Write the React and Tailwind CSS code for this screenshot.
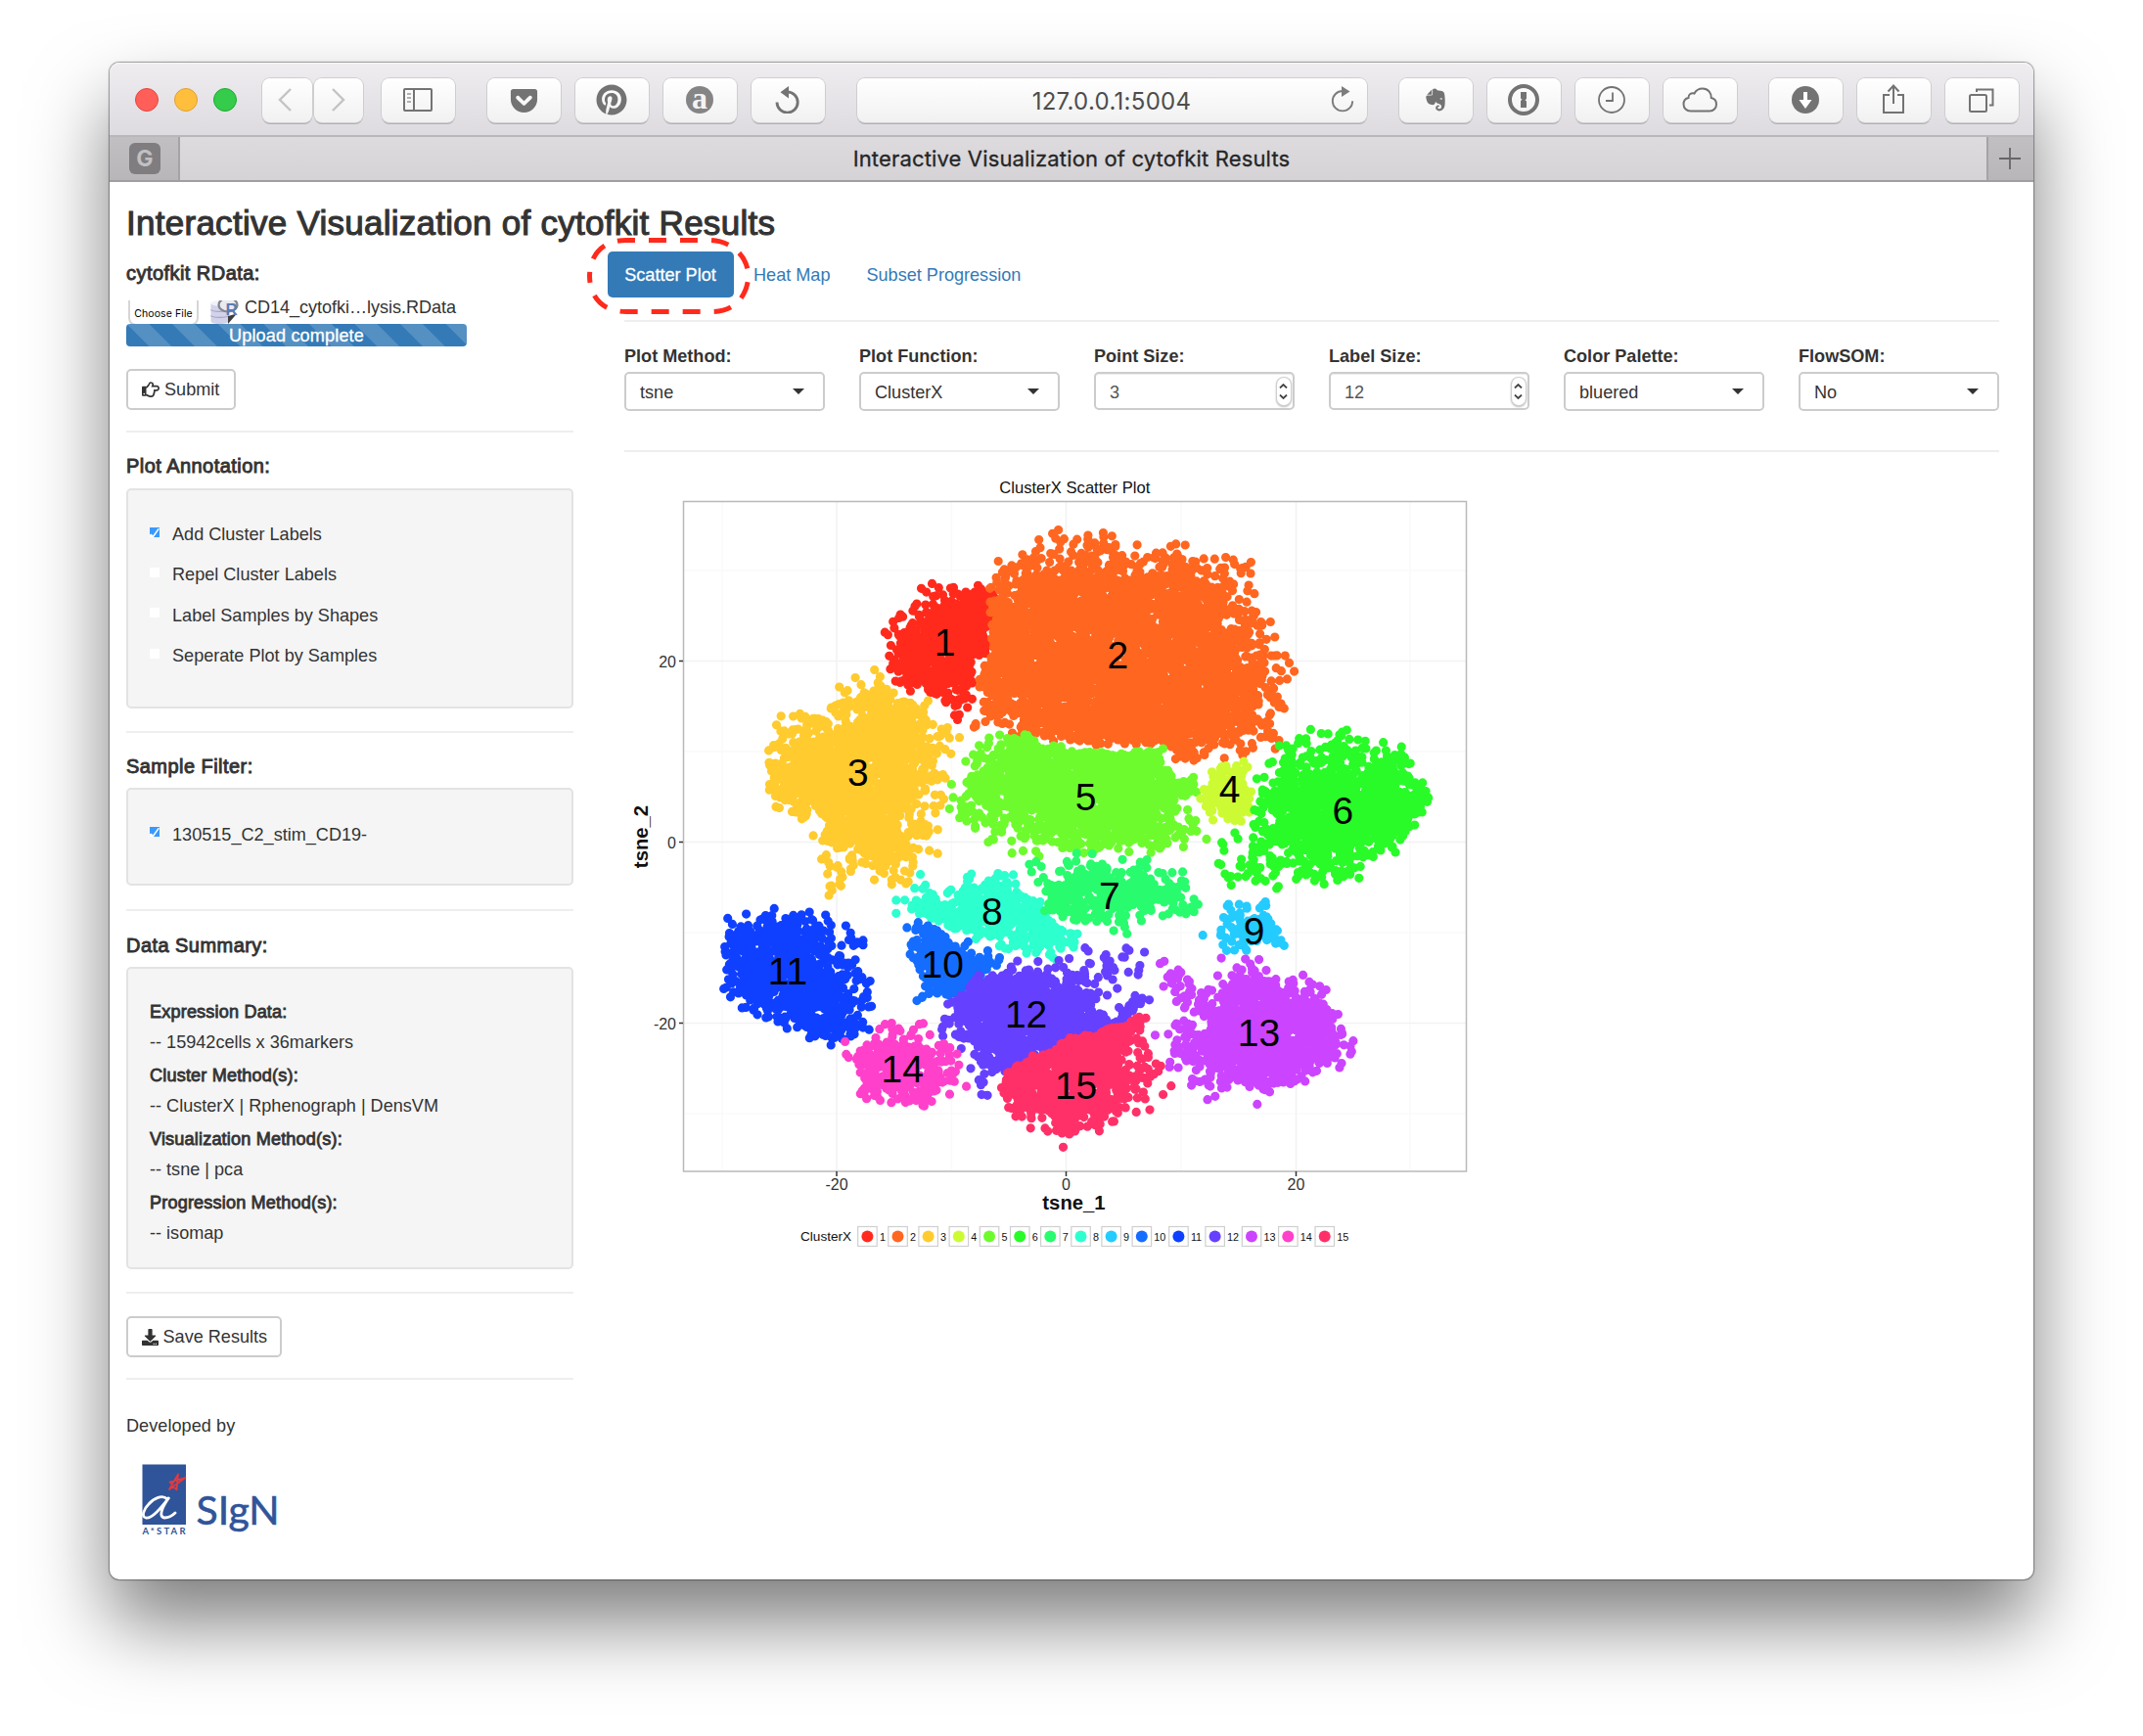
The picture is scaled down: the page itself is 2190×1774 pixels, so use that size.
import React from "react";
import { FaGetPocket, FaPinterest, FaEvernote, FaRegHandPointRight, FaDownload } from "react-icons/fa";

const ARIAL = "font-['Liberation_Sans',Arial,sans-serif]";
const BTN =
  "flex h-[45px] shrink-0 items-center justify-center rounded-[8px] bg-linear-to-b from-white to-[#f1f1f1] text-[#737373] shadow-[0_0_0_1px_#cfcdd0,0_2px_0_0_#b3b1b4]";

function ToolButton({ className = "w-[75px]", children }) {
  return <div className={`${BTN} ${className}`}>{children}</div>;
}

function Toolbar() {
  return (
    <div className="flex h-[74px] items-start rounded-t-[10px] bg-linear-to-b from-[#efedf0] to-[#dddbdf] pt-[15.5px] pl-[26px] shadow-[inset_0_1px_0_#f8f8f8]">
      <div className="flex h-[45px] items-center gap-4">
        <div className="size-6 rounded-full border border-[#e2463f] bg-[#ff5f58]" />
        <div className="size-6 rounded-full border border-[#e0a032] bg-[#ffbf3c]" />
        <div className="size-6 rounded-full border border-[#1dab32] bg-[#35cb4b]" />
      </div>
      <ToolButton className="ml-[26px] w-[51px] pr-[5px]">
        <svg width="14" height="24" viewBox="0 0 14 24" fill="none" stroke="#c3c3c3" strokeWidth="2.4"><path d="M13 1 2 12l11 11" /></svg>
      </ToolButton>
      <ToolButton className="ml-[1.5px] w-[50px]">
        <svg width="14" height="24" viewBox="0 0 14 24" fill="none" stroke="#c3c3c3" strokeWidth="2.4"><path d="m1 1 11 11L1 23" /></svg>
      </ToolButton>
      <ToolButton className="ml-[19px] w-[75px]">
        <svg width="30" height="24" viewBox="0 0 30 24" fill="none" stroke="#737373" strokeWidth="2">
          <rect x="1" y="1" width="28" height="22" rx="1" />
          <path d="M11 1v22" />
          <path d="M4 6h4M4 10h4M4 14h4" stroke="#999" strokeWidth="1.6" />
        </svg>
      </ToolButton>
      <div className="ml-[33px] flex gap-[15px]">
        <ToolButton><FaGetPocket size={31} /></ToolButton>
        <ToolButton><FaPinterest size={32} /></ToolButton>
        <ToolButton>
          <div className="flex size-[28px] items-center justify-center rounded-full bg-[#858585] pb-[4px] font-['Liberation_Serif',serif] text-[32px] leading-none font-bold text-[#f4f4f4]">a</div>
        </ToolButton>
        <ToolButton>
          <svg width="26" height="28" viewBox="0 0 26 28" fill="none" stroke="#737373" strokeWidth="2.8">
            <path d="M2 16.5a10.6 10.6 0 1 0 10.6-10.6" />
            <path d="M14 0v12.5L5.5 6.3Z" fill="#737373" stroke="none" />
          </svg>
        </ToolButton>
      </div>
      <div className={`${BTN} relative ml-[33px] w-[521px] pt-[4px]`}>
        <span className="font-[Inter,sans-serif] text-[24px] leading-none tracking-[0.3px] text-[#4d4d4d]">127.0.0.1:5004</span>
        <svg className="absolute top-[8px] right-[13px]" width="24" height="27" viewBox="0 0 24 27" fill="none" stroke="#7c7c7c" strokeWidth="1.9">
          <path d="M12 5A10.2 10.2 0 1 0 22.2 15.2" />
          <path d="M11 0v11l8.5-5.5Z" fill="#7c7c7c" stroke="none" />
        </svg>
      </div>
      <div className="ml-[33px] flex gap-[15px]">
        <ToolButton><FaEvernote size={26} /></ToolButton>
        <ToolButton>
          <svg width="32" height="32" viewBox="0 0 32 32" fill="none">
            <circle cx="16" cy="16" r="14" stroke="#737373" strokeWidth="4" />
            <path d="M13 8h6v7l-1.5 1.3L19 17.6V24h-6v-7l1.5-1.3L13 14.4Z" fill="#737373" />
          </svg>
        </ToolButton>
        <ToolButton>
          <svg width="28" height="28" viewBox="0 0 28 28" fill="none" stroke="#737373" strokeWidth="1.8">
            <circle cx="14" cy="14" r="13" />
            <path d="M15 6.5V15H8" />
          </svg>
        </ToolButton>
        <ToolButton>
          <svg width="37" height="26" viewBox="0 0 37 26" fill="none" stroke="#737373" strokeWidth="2">
            <path d="M8.5 24.5A7 7 0 0 1 1.5 17.5C1.5 14 3.8 11.5 6.5 11 6.2 7.5 9.5 5.3 12.5 6.5 14.2 3.3 17.5 1.5 21 1.5c5.5 0 9 4.5 8.8 9.6 3 .6 5.2 3.3 5.2 6.7a6.7 6.7 0 0 1-6.7 6.7Z" />
          </svg>
        </ToolButton>
      </div>
      <div className="ml-[33px] flex gap-[15px]">
        <ToolButton>
          <svg width="28" height="28" viewBox="0 0 28 28">
            <circle cx="14" cy="14" r="14" fill="#737373" />
            <path d="M12 6h4v8h4.5L14 23 7.5 14H12Z" fill="#fff" />
          </svg>
        </ToolButton>
        <ToolButton>
          <svg className="mb-[2px]" width="24" height="30" viewBox="0 0 24 30" fill="none" stroke="#737373" strokeWidth="2">
            <path d="M8 11H2v18h20V11h-6" />
            <path d="M12 20V2M6.5 7.5 12 1.5l5.5 6" />
          </svg>
        </ToolButton>
        <ToolButton>
          <svg width="26" height="25" viewBox="0 0 26 25" fill="none" stroke="#737373" strokeWidth="2">
            <rect x="1" y="7" width="17" height="17" rx="1.5" />
            <path d="M8 4V1.5h16.5V17.5H21" />
          </svg>
        </ToolButton>
      </div>
    </div>
  );
}

function TabBar() {
  return (
    <div className="flex h-[48px] border-y-2 border-t-[#b9b7ba] border-b-[#9f9f9f]">
      <div className="flex w-[72px] items-center justify-center border-r-2 border-[#a5a3a6] bg-linear-to-b from-[#c1bfc2] to-[#b8b6b9] pb-px pl-[2px]">
        <div className="flex size-8 items-center justify-center rounded-[6px] bg-[#7f7d80] pt-px font-[Inter,sans-serif] text-[23px] font-bold leading-none text-[#c2c0c3]">G</div>
      </div>
      <div className="flex flex-1 items-center justify-center bg-linear-to-b from-[#dddbde] to-[#d5d3d6] pr-[24px] font-[Inter,sans-serif] text-[22px] leading-none tracking-[0.15px] text-[#262626] [-webkit-text-stroke:0.3px_#262626]">
        Interactive Visualization of cytofkit Results
      </div>
      <div className="flex w-[48px] items-center justify-center border-l-2 border-[#a5a3a6] bg-linear-to-b from-[#c1bfc2] to-[#b8b6b9] pr-[2px]">
        <svg width="22" height="22" viewBox="0 0 22 22" stroke="#666" strokeWidth="1.8"><path d="M11 0v22M0 11h22" /></svg>
      </div>
    </div>
  );
}

const Rule = ({ className }) => <div className={`h-[2px] bg-[#eeeeee] ${className}`} />;

const Heading = ({ className, children }) => (
  <div className={`text-[20px] leading-7 tracking-[0.45px] whitespace-nowrap [-webkit-text-stroke:0.9px_#333] ${className}`}>{children}</div>
);

const Well = ({ className, children }) => (
  <div className={`mt-[9px] rounded-[5px] border-2 border-[#e3e3e3] bg-[#f5f5f5] pl-[22px] ${className}`}>{children}</div>
);

function CheckRow({ checked, label }) {
  return (
    <div className="flex h-[41.3px] items-center">
      <div className="mb-[5px] size-[10px] bg-white">
        {checked && (
          <svg className="block" width="10" height="10" viewBox="0 0 10 10">
            <path d="M0 0H10V10H4L10 1.5 8.5 1 3.5 8 1 6.5 0 7.5Z" fill="#3b99fc" />
          </svg>
        )}
      </div>
      <span className="ml-[13px] leading-none">{label}</span>
    </div>
  );
}

const SUMMARY = [
  ["Expression Data:", "-- 15942cells x 36markers"],
  ["Cluster Method(s):", "-- ClusterX | Rphenograph | DensVM"],
  ["Visualization Method(s):", "-- tsne | pca"],
  ["Progression Method(s):", "-- isomap"],
];

function RDataIcon() {
  return (
    <svg width="29" height="24" viewBox="0 0 29 24">
      <path d="M0.5 3v18c0 2 3 3 9 3s9-1 9-3V3Z" fill="#d2d2ea" />
      <ellipse cx="9.5" cy="3" rx="9" ry="2.8" fill="#f1f1fa" />
      <path d="M.5 9.500c2 2.500 16 2.500 18 0M.5 15.500c2 2.500 16 2.500 18 0" fill="none" stroke="#a3a3c6" strokeWidth="1.2" />
      <path d="M18 24V16L27 13.500Z" fill="#3d3d3d" />
      <ellipse cx="18" cy="4.500" rx="9.500" ry="7" fill="#e8eaf0" stroke="#83868d" strokeWidth="2.200" />
      <text x="15.500" y="14.500" fontSize="17" fontWeight="700" fill="#5b7db5" fontFamily="Liberation Sans">R</text>
    </svg>
  );
}

function Logo() {
  return (
    <svg className="mt-[25px] ml-4 block" width="146" height="80" viewBox="145 1495 146 80">
      <rect x="145.5" y="1496.5" width="44.5" height="61.5" fill="#30549a" />
      <path d="M171 1532c-5-5-14-1-19 5-5 5-8 13-3 14 7 1 16-11 24-21-6 8-12 20-5 21 4 0 8-2 11-5" fill="none" stroke="#fff" strokeWidth="2.8" strokeLinecap="round" />
      <path d="M173 1522 182 1506.500 180.500 1522.500 173.500 1514.500 189.500 1510Z" fill="none" stroke="#e5393c" strokeWidth="1.7" strokeLinejoin="round" />
      <text x="145.5" y="1568" fontSize="9.500" fontWeight="700" textLength="44" fill="#30549a" fontFamily="Lato">A*STAR</text>
      <text x="200.5" y="1558" fontSize="41" textLength="85" fill="#30549a" stroke="#30549a" strokeWidth="0.6" fontFamily="Lato">SIgN</text>
    </svg>
  );
}

function Sidebar() {
  return (
    <div className="flex w-[457px] shrink-0 flex-col">
      <Heading className="mt-[18px] h-7">cytofkit RData:</Heading>
      <div className="mt-[14px] flex h-6 items-start">
        <div className="ml-[2px] h-6 overflow-hidden">
          <div className="mt-[-8px] flex h-[34px] w-[72px] items-end justify-center rounded-[8px] border-2 border-[#d6d6d6] pb-[3px] font-[Inter,sans-serif] text-[10.5px] leading-[14px] tracking-[0.1px] whitespace-nowrap text-black">Choose File</div>
        </div>
        <div className="ml-[12px]"><RDataIcon /></div>
        <span className="mt-[-3px] ml-[6px] leading-5 tracking-[-0.05px] whitespace-nowrap">CD14_cytofki…lysis.RData</span>
      </div>
      <div className="flex h-[22.5px] w-[348px] items-center justify-center rounded-[4px] bg-[#337ab7] bg-[linear-gradient(45deg,rgba(255,255,255,.17)_25%,transparent_25%,transparent_50%,rgba(255,255,255,.17)_50%,rgba(255,255,255,.17)_75%,transparent_75%)] bg-[length:46.6px_46.6px] pt-[2px] leading-none tracking-[0.15px] text-white [-webkit-text-stroke:0.3px_white]">
        Upload complete
      </div>
      <button className="mt-[23.5px] flex h-[42px] w-[112px] items-center rounded-[5px] border-2 border-[#ccc] pl-[14px]">
        <FaRegHandPointRight size={18} />
        <span className="ml-[5px] leading-none">Submit</span>
      </button>
      <Rule className="mt-[21px]" />
      <Heading className="mt-[20px] h-7">Plot Annotation:</Heading>
      <Well className="h-[225px] pt-[24.5px]">
        <CheckRow checked label="Add Cluster Labels" />
        <CheckRow label="Repel Cluster Labels" />
        <CheckRow label="Label Samples by Shapes" />
        <CheckRow label="Seperate Plot by Samples" />
      </Well>
      <Rule className="mt-[23px]" />
      <Heading className="mt-[20px] h-[27px]">Sample Filter:</Heading>
      <Well className="h-[100px] pt-[25px]">
        <CheckRow checked label="130515_C2_stim_CD19-" />
      </Well>
      <Rule className="mt-[24px]" />
      <Heading className="mt-[21px] h-[27px]">Data Summary:</Heading>
      <Well className="h-[309px] pt-[28px]">
        {SUMMARY.map(([title, text]) => (
          <div key={title} className="h-[65px]">
            <div className="h-8 leading-8 tracking-[0.17px] [-webkit-text-stroke:0.8px_#333]">{title}</div>
            <div className="h-[31px] leading-[31px]">{text}</div>
          </div>
        ))}
      </Well>
      <Rule className="mt-[23px]" />
      <button className="mt-[23px] flex h-[42px] w-[159px] items-center rounded-[5px] border-2 border-[#ccc] pl-[14px]">
        <FaDownload size={17} />
        <span className="ml-[4.5px] leading-none whitespace-nowrap">Save Results</span>
      </button>
      <Rule className="mt-[21px]" />
      <div className="mt-[34px] leading-[26px] tracking-[0.05px]">Developed by</div>
      <Logo />
    </div>
  );
}

function Tabs() {
  return (
    <div className="relative mt-[10px] flex h-[47px] w-fit gap-[3px] text-[#337ab7]">
      <div className="flex w-[129px] items-center justify-center rounded-[5px] bg-[#337ab7] pt-[2px] pr-px text-white [-webkit-text-stroke:0.3px_white]">Scatter Plot</div>
      <div className="flex items-center px-[17px] pt-[2px]">Heat Map</div>
      <div className="flex items-center px-[17px] pt-[2px]">Subset Progression</div>
      <svg className="absolute top-[-16px] left-[-23px]" width="172" height="84" viewBox="598 241 172 84" fill="none">
        <path d="M602.5 282C603 258 618 245.5 640 245.5H724C748 245.5 764 262 765 282 763 306 748 318.5 728 318.5H640C618 318.500 603 306 602.500 282Z" stroke="#ff2a1c" strokeWidth="5" strokeDasharray="18 14" strokeDashoffset="14" />
      </svg>
    </div>
  );
}

function Select({ label, value }) {
  return (
    <div className="w-[205px]">
      <div className="h-[26px] pt-px leading-[26px] font-bold">{label}</div>
      <div className="mt-1 flex h-10 items-center justify-between rounded-[5px] border-2 border-[#ccc] pr-[19px] pl-[14px]">
        <span className="pt-[3px]">{value}</span>
        <svg className="mb-[1px]" width="12" height="6" viewBox="0 0 12 6"><path d="M0 0h12L6 6Z" fill="#333" /></svg>
      </div>
    </div>
  );
}

function NumberField({ label, value }) {
  return (
    <div className="w-[205px]">
      <div className="h-[26px] pt-px leading-[26px] font-bold">{label}</div>
      <div className="mt-1 flex h-[39px] items-center justify-between rounded-[5px] border-2 border-[#ccc] pr-[2.5px] pl-[14px] text-[#555] shadow-[inset_0_1px_1px_rgba(0,0,0,.07)]">
        <span className="pt-[5px]">{value}</span>
        <div className="flex h-[28px] w-[14px] flex-col items-center justify-center gap-[6px] rounded-full bg-white shadow-[0_0_0_1px_#cfcfcf,0_1px_2px_1px_#bbb]">
          <svg width="9" height="5" viewBox="0 0 9 5" fill="none" stroke="#444" strokeWidth="1.8"><path d="m1 4.500 3.500-3.500L8 4.500" /></svg>
          <svg width="9" height="5" viewBox="0 0 9 5" fill="none" stroke="#444" strokeWidth="1.8"><path d="m1 .5 3.500 3.500L8 .5" /></svg>
        </div>
      </div>
    </div>
  );
}

// Each outline vertex is [x, y, softness]; softness thins the points toward that edge.
const CLUSTERS = [
  { id: 1, color: "#ff2a1c", at: [965.5, 670], outline: [[608,325,.5],[650,330,.4],[684,360,.1],[682,450,.1],[664,500,.1],[674,560,.1],[638,600,.2],[652,730,.9],[605,795,1],[568,740,.8],[540,702,.2],[475,675,.5],[455,590,.8],[456,505,1],[495,430,.7],[540,340,1]] },
  { id: 2, color: "#ff6620", at: [1142.3, 682.5], outline: [[862,172,1],[935,192,.9],[990,192,.8],[1035,225,.9],[1088,255,.9],[1150,272,1],[1155,380,1],[1190,450,1],[1194,530,1],[1222,600,1],[1234,660,1],[1210,720,1],[1220,790,1],[1194,870,1],[1140,902,1],[1060,904,.5],[1005,925,.2],[980,862,.1],[930,866,.2],[845,866,.2],[790,845,.2],[745,838,.3],[680,820,.7],[595,815,.8],[645,730,.4],[624,640,.1],[656,560,.1],[652,400,.1],[656,330,.5],[638,285,.9],[690,232,1],[728,190,1],[775,165,1],[820,172,1]] },
  { id: 3, color: "#ffcb2e", at: [876.8, 803], outline: [[462,592,.6],[505,670,.2],[558,700,.4],[588,780,.9],[634,840,1],[606,930,1],[610,1010,1],[576,1070,1],[588,1160,1],[545,1240,1],[508,1310,1],[470,1284,.8],[430,1253,.5],[392,1345,1],[335,1298,1],[346,1180,.8],[310,1150,1],[352,1092,.2],[325,1097,.3],[266,1042,.3],[253,980,.3],[238,900,.4],[250,828,.7],[268,748,.9],[314,712,.9],[368,652,1],[425,617,1]] },
  { id: 5, color: "#6efb2e", at: [1109.7, 828], outline: [[710,782,.4],[760,824,.1],[840,848,.1],[930,848,.1],[985,840,.1],[1000,912,.2],[1062,888,.9],[1070,960,1],[1050,1010,1],[1054,1090,1],[1070,1130,1],[1018,1200,.8],[930,1193,.5],[870,1188,.3],[800,1204,.5],[740,1196,.9],[645,1184,1],[618,1136,1],[558,1100,1],[575,1040,1],[578,970,1],[584,870,1],[614,812,1],[670,792,.8]] },
  { id: 4, color: "#ccfb33", at: [1256.7, 820], outline: [[1072,882,.7],[1140,882,.5],[1146,980,.4],[1146,1076,.4],[1088,1118,.9],[1050,1074,.9],[1026,980,.8],[1052,912,.9]] },
  { id: 6, color: "#29fb29", at: [1372.4, 842], outline: [[1245,764,1],[1292,764,1],[1328,784,1],[1364,808,1],[1416,840,.7],[1444,882,.5],[1454,940,.5],[1485,985,.3],[1463,1060,.2],[1439,1118,.3],[1426,1188,.7],[1340,1270,.8],[1240,1304,.9],[1162,1296,1],[1090,1290,1],[1056,1212,1],[1072,1136,1],[1118,1062,.9],[1138,990,.6],[1144,890,1],[1186,828,1]] },
  { id: 8, color: "#2effcf", at: [1013.8, 945], outline: [[625,1174,.9],[652,1236,.4],[708,1174,1],[718,1258,.4],[760,1305,.1],[780,1370,.1],[848,1402,.5],[848,1474,.5],[795,1518,.4],[740,1503,.4],[680,1484,.5],[640,1478,.7],[595,1428,.1],[550,1390,.1],[442,1360,1],[504,1285,1],[536,1222,.9],[590,1262,.7],[598,1205,.5]] },
  { id: 7, color: "#29fb6e", at: [1133.9, 928.5], outline: [[845,1156,.5],[890,1182,.8],[958,1154,1],[964,1220,.5],[1046,1218,.9],[1042,1290,.5],[1070,1366,.9],[985,1414,1],[950,1380,.6],[915,1444,1],[880,1430,.8],[815,1397,.3],[745,1372,.2],[760,1310,.2],[728,1275,.9],[720,1168,1],[775,1210,.7],[810,1166,.7]] },
  { id: 9, color: "#24cbff", at: [1281.5, 964.5], outline: [[1056,1284,1],[1125,1326,.8],[1172,1310,.9],[1196,1380,.4],[1204,1430,.4],[1226,1480,.6],[1160,1480,.5],[1115,1514,.9],[1040,1430,1],[1078,1356,.8]] },
  { id: 10, color: "#146dff", at: [963.3, 998.5], outline: [[538,1356,.4],[580,1388,.3],[608,1422,.5],[645,1452,.6],[706,1490,.8],[690,1530,.4],[655,1550,.1],[605,1632,.1],[555,1628,.6],[540,1660,1],[476,1674,1],[533,1580,.5],[513,1530,.3],[494,1430,1],[498,1376,1]] },
  { id: 11, color: "#1040ff", at: [805, 1005.5], outline: [[250,1326,.5],[340,1320,.7],[390,1334,1],[412,1410,1],[478,1406,1],[460,1490,1],[460,1600,.8],[486,1634,1],[456,1742,1],[385,1804,.5],[330,1761,.3],[240,1692,.3],[178,1638,.5],[148,1555,.8],[165,1430,.3],[174,1360,.9]] },
  { id: 12, color: "#6640ff", at: [1048.6, 1049.5], outline: [[700,1492,.4],[775,1484,.7],[830,1456,.9],[865,1420,.7],[950,1446,1],[950,1560,.8],[884,1614,.8],[880,1640,.4],[930,1582,.5],[996,1598,.4],[955,1655,.2],[900,1725,0],[800,1765,0],[760,1800,0],[700,1860,0],[668,1918,.8],[638,1968,1],[606,1944,1],[625,1850,.4],[599,1790,.5],[560,1752,1],[540,1688,1],[568,1620,1],[601,1600,.1],[634,1536,.1]] },
  { id: 13, color: "#cb44ff", at: [1286.5, 1068.5], outline: [[1055,1562,.6],[1078,1474,1],[1135,1478,.6],[1180,1490,1],[1220,1508,1],[1250,1534,.8],[1298,1590,.5],[1313,1660,.4],[1345,1762,.8],[1322,1834,.9],[1270,1873,.3],[1215,1923,.4],[1155,1966,.6],[1110,1923,.3],[1054,1960,1],[1018,1924,.9],[984,1840,.8],[962,1780,.9],[940,1720,1],[976,1680,1],[998,1640,1],[960,1592,.4],[934,1540,1],[1030,1432,1],[1050,1545,.9]] },
  { id: 14, color: "#ff40cb", at: [922.3, 1105.5], outline: [[550,1644,1],[552,1720,.7],[604,1750,.9],[622,1825,1],[646,1900,1],[592,1928,.7],[555,1966,.5],[500,1966,.5],[408,1952,.6],[415,1850,.2],[380,1800,1],[394,1735,1],[452,1695,.9],[486,1650,1],[510,1720,.7]] },
  { id: 15, color: "#ff3068", at: [1099.6, 1122.5], outline: [[938,1638,.2],[964,1680,.3],[952,1760,.7],[984,1804,1],[1004,1870,1],[998,1950,1],[964,1996,.9],[908,2004,.6],[884,2044,1],[835,2065,.3],[798,2092,1],[752,2047,.5],[714,2020,.8],[692,1975,.2],[665,1900,.2],[690,1842,0],[735,1786,0],[775,1776,0],[795,1730,0],[860,1712,0],[910,1685,0]] },
];

function seeded(seed) {
  let s = seed;
  return () => {
    s = (s + 0x6d2b79f5) | 0;
    let t = Math.imul(s ^ (s >>> 15), 1 | s);
    t = (t + Math.imul(t ^ (t >>> 7), 61 | t)) ^ t;
    return ((t ^ (t >>> 14)) >>> 0) / 4294967296;
  };
}

function pointPath(outline, seed) {
  const rand = seeded(seed * 7919);
  const poly = outline.map(([x, y, s]) => [640 + x * 0.5612, 480 + y / 3, s]);
  const xs = poly.map((p) => p[0]);
  const ys = poly.map((p) => p[1]);
  const x0 = Math.min(...xs), x1 = Math.max(...xs), y0 = Math.min(...ys), y1 = Math.max(...ys);
  const box = (x1 - x0) * (y1 - y0);
  const fade = Math.min(66, Math.sqrt(box) * 0.36);
  const tries = Math.round((box * 6) / 66);
  let d = "";
  for (let k = 0; k < tries; k++) {
    const px = x0 + rand() * (x1 - x0);
    const py = y0 + rand() * (y1 - y0);
    let inside = false, best = Infinity, soft = 0;
    for (let i = 0, j = poly.length - 1; i < poly.length; j = i++) {
      const [ax, ay, as] = poly[i];
      const [bx, by, bs] = poly[j];
      if (ay > py !== by > py && px < ((bx - ax) * (py - ay)) / (by - ay) + ax) inside = !inside;
      const t = Math.max(0, Math.min(1, ((px - ax) * (bx - ax) + (py - ay) * (by - ay)) / ((bx - ax) ** 2 + (by - ay) ** 2)));
      const dist = Math.hypot(px - ax - t * (bx - ax), py - ay - t * (by - ay));
      if (dist < best) { best = dist; soft = as + t * (bs - as); }
    }
    if (!inside || best < 3.5) continue;
    const keep = soft > 0.02 ? 0.055 + Math.pow((best - 3.5) / (soft * fade), 1.5) : 1;
    if (rand() < keep) d += `M${px.toFixed(1)} ${py.toFixed(1)}h0`;
  }
  return d;
}

const LEGEND_X = [886.4, 917.5, 948.6, 979.8, 1011, 1042.2, 1073.3, 1104.5, 1135.6, 1166.8, 1204.4, 1241.6, 1279, 1316.3, 1353.7];

function ScatterPlot() {
  return (
    <svg className="mt-[18px] block" width="880" height="820" viewBox="638 480 880 820" fontFamily="Liberation Sans, Arial, sans-serif" fill="#111">
      <text x="1098.3" y="504" fontSize="16.6" textAnchor="middle">ClusterX Scatter Plot</text>
      <path d="M738 512V1197M972.5 512V1197M1207 512V1197M1441 512V1197M698 583H1498M698 768H1498M698 953H1498M698 1138H1498" stroke="#fafafa" strokeWidth="1.5" />
      <path d="M855 512V1197M1089.5 512V1197M1324.5 512V1197M698 675.5H1498M698 860.5H1498M698 1045.5H1498" stroke="#f2f2f2" strokeWidth="1.5" />
      <rect x="698.5" y="512.5" width="800" height="684.5" fill="none" stroke="#b9b9b9" strokeWidth="1.5" />
      <path d="M855 1197v5M1089.5 1197v5M1324.5 1197v5M698 675.5h-4M698 860.5h-4M698 1045.5h-4" stroke="#333" strokeWidth="1.5" />
      {CLUSTERS.map((c) => (
        <path key={c.id} d={pointPath(c.outline, c.id)} stroke={c.color} strokeWidth="9.2" strokeLinecap="round" />
      ))}
      {CLUSTERS.map((c) => (
        <text key={c.id} x={c.at[0]} y={c.at[1]} fontSize="39" textAnchor="middle" fill="#000">{c.id}</text>
      ))}
      <g fontSize="16" fill="#333">
        <text x="691" y="681.5" textAnchor="end">20</text>
        <text x="691" y="866.5" textAnchor="end">0</text>
        <text x="691" y="1051.5" textAnchor="end">-20</text>
        <text x="855" y="1216" textAnchor="middle">-20</text>
        <text x="1089.5" y="1216" textAnchor="middle">0</text>
        <text x="1324.5" y="1216" textAnchor="middle">20</text>
      </g>
      <text x="1097.5" y="1236" fontSize="20.3" fontWeight="700" textAnchor="middle">tsne_1</text>
      <text transform="translate(662 855) rotate(-90)" fontSize="20.3" fontWeight="700" textAnchor="middle">tsne_2</text>
      <text x="818" y="1268" fontSize="13.6">ClusterX</text>
      {LEGEND_X.map((x, i) => (
        <g key={x}>
          <rect x={x - 9.7} y="1253.5" width="19.5" height="20" fill="#fff" stroke="#cfcfcf" strokeWidth="1.2" />
          <circle cx={x} cy="1263.5" r="6" fill={CLUSTERS.find((c) => c.id === i + 1).color} />
          <text x={x + 12.5} y="1267.5" fontSize="10.8">{i + 1}</text>
        </g>
      ))}
    </svg>
  );
}

function Main() {
  return (
    <div className="ml-[35px] flex-1 pr-[35px]">
      <Tabs />
      <div className="pl-[17px]">
        <Rule className="mt-[23px]" />
        <div className="mt-[21px] flex h-[70px] items-start justify-between">
          <Select label="Plot Method:" value="tsne" />
          <Select label="Plot Function:" value="ClusterX" />
          <NumberField label="Point Size:" value="3" />
          <NumberField label="Label Size:" value="12" />
          <Select label="Color Palette:" value="bluered" />
          <Select label="FlowSOM:" value="No" />
        </div>
        <Rule className="mt-[40px]" />
        <ScatterPlot />
      </div>
    </div>
  );
}

export default function App() {
  return (
    <div className="h-[1774px] w-[2190px] overflow-hidden bg-white pt-16 pl-[112px]">
      <div className={`h-[1550px] w-[1966px] rounded-[10px] bg-white shadow-[0_0_0_1px_rgba(0,0,0,.25),0_0_2px_1px_rgba(0,0,0,.15),0_44px_80px_rgba(0,0,0,.51)] ${ARIAL}`}>
        <Toolbar />
        <TabBar />
        <div className="pl-[17px] text-[18.1px] text-[#333]">
          <h1 className="h-[61px] pt-[22px] text-[35px] leading-10 tracking-[0.27px] [-webkit-text-stroke:1.1px_#333]">Interactive Visualization of cytofkit Results</h1>
          <div className="flex">
            <Sidebar />
            <Main />
          </div>
        </div>
      </div>
    </div>
  );
}
